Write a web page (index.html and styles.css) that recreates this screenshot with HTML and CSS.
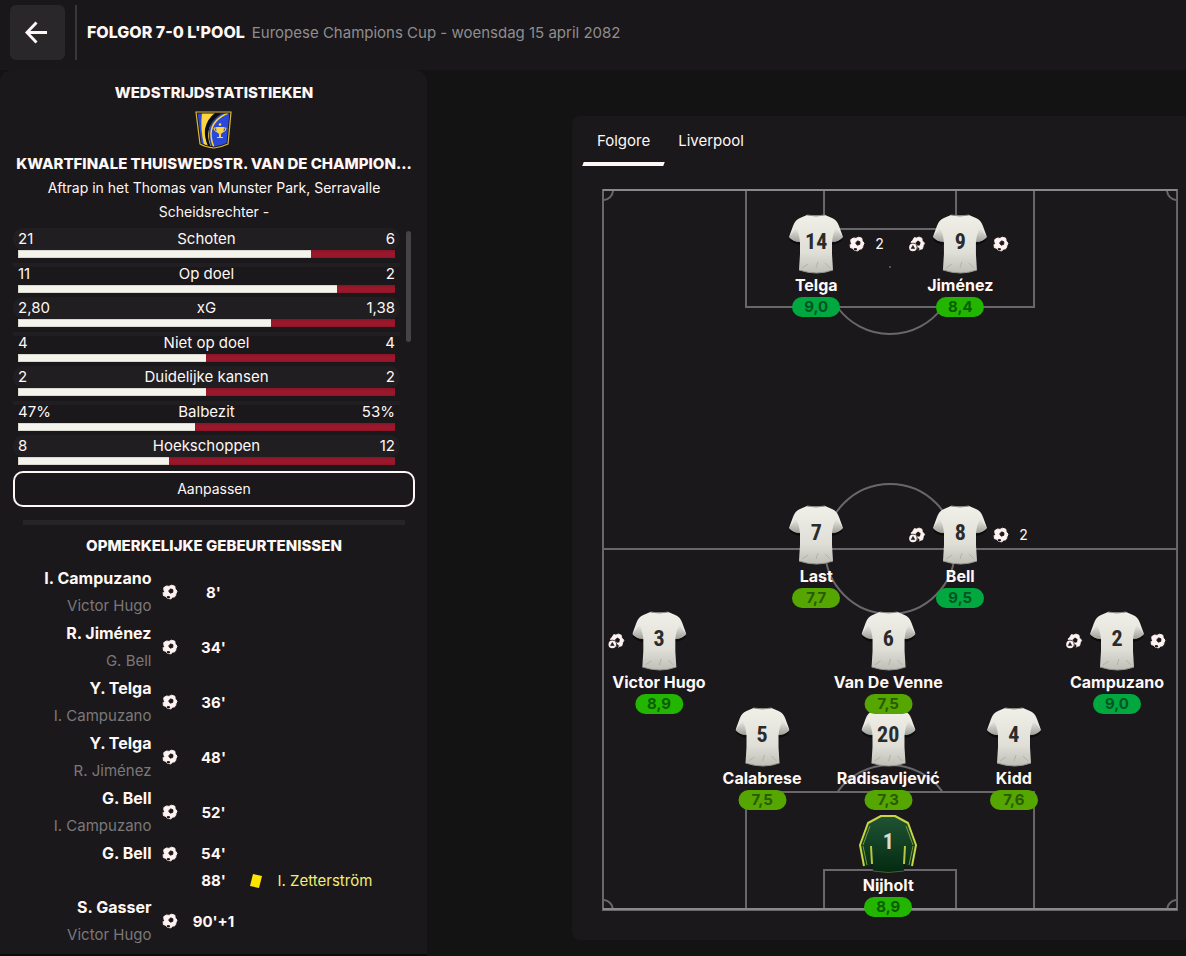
FILE: index.html
```html
<!DOCTYPE html>
<html lang="nl">
<head>
  <meta charset="UTF-8">
  <meta name="viewport" content="width=device-width, initial-scale=1.0">
  <title>Folgor 7-0 L'Pool</title>
  <link rel="stylesheet" href="styles.css">
</head>
<body>
  <!-- icons -->
  <svg class="sprite" aria-hidden="true">
    <defs>
      <linearGradient id="cloth" x1="0" y1="0" x2="0" y2="1">
        <stop offset="0" stop-color="#f0f0e9"/>
        <stop offset="0.65" stop-color="#dfdfd8"/>
        <stop offset="1" stop-color="#bfbfb8"/>
      </linearGradient>
      <linearGradient id="fold" x1="0" y1="0" x2="0" y2="1">
        <stop offset="0" stop-color="#000" stop-opacity="0"/>
        <stop offset="1" stop-color="#000" stop-opacity="0.3"/>
      </linearGradient>
      <linearGradient id="keeperCloth" x1="0" y1="0" x2="0" y2="1">
        <stop offset="0" stop-color="#1f5434"/>
        <stop offset="1" stop-color="#042a12"/>
      </linearGradient>
    </defs>
    <symbol id="ball" viewBox="0 0 16 16">
      <path d="M4.6 2 7 2.400 9.600 1.200 12.800 2.200 13.200 4.800 15 7.200 14 9.600 13.400 12.600 10.600 13.200 8.800 14.800 5.400 14.400 4.200 12.400 1.400 11.600 1.200 8.600 2 6.800 1.800 3.600Z" fill="#fff3f1" stroke="#fff3f1" stroke-width="1" stroke-linejoin="round"/>
      <path d="M8.600 4.800 11 5.800 10.800 8.400 8.200 9.200 6.600 7Z" fill="#1a181b" stroke="#1a181b" stroke-width="0.8" stroke-linejoin="round"/>
      <path d="M5 12.200 7.400 12 8.200 13.400 7 14.600 5 14.200ZM0.800 6.400 2.400 7.200 1 8.600ZM14 11.400 12.800 13.200 14.400 13Z" fill="#1a181b"/>
    </symbol>
    <symbol id="assist" viewBox="0 0 18 16">
      <path d="M6.4 1.6 8.6 2 11 1 14 2.2 14.4 4.8 16.6 7.2 15.4 9.6 14.6 12.8 12 13.4 10.8 14.6 8 13 3 6 4.6 4.6Z" fill="#fff3f1" stroke="#fff3f1" stroke-width="0.8" stroke-linejoin="round"/>
      <path d="M10 4.6 12.6 6.2 12 9.2 9.8 9.8 7.4 7Z" fill="#1a181b"/>
      <path d="M10 11 11.6 12.8 10.4 15.4 8.6 15Z" fill="#1a181b"/>
      <circle cx="5" cy="11.4" r="4.6" fill="#1a181b"/>
      <circle cx="5" cy="11.4" r="3.8" fill="#fff3f1"/>
      <path d="M5 9.400 6.800 12.600H3.200Z" fill="#1a181b" stroke="#1a181b" stroke-width="0.6" stroke-linejoin="round"/>
    </symbol>
    <symbol id="shirt" viewBox="0 0 54 60">
      <path d="M1 25Q5 29 11 30M53 25Q49 29 43 30" fill="none" stroke="#0c0b0d" stroke-width="2"/>
      <path d="M18 1Q27 2 36 1L43 4Q48 6 50 12L54 23Q50 28 43 28L43 40 44 56Q28 62 10 56L11 40 11 28Q4 28 0 23L4 12Q6 6 11 4Z" fill="url(#cloth)"/>
      <path d="M7 14Q10 19 11 28 4 28 0 23ZM47 14Q44 19 43 28 50 28 54 23Z" fill="url(#fold)"/>
      <path d="M18 1Q27 3 36 1" fill="none" stroke="#8b8a83" stroke-width="1"/>
      <path d="M13 54 19 50M27 54 29 48M36 49 41 54" stroke="#b2b2ab" stroke-width="1" fill="none"/>
      <path d="M10 56Q28 62 44 56" fill="none" stroke="#98978f" stroke-width="1"/>
    </symbol>
    <symbol id="keeper-shirt" viewBox="0 0 58 60">
      <path d="M22 2H36L50 9 57 31 53 53 46 52 45 34 45 57Q29 60 14 57L13 34 12 52 5 53 1 31 8 9Z" fill="url(#keeperCloth)"/>
      <path d="M5 52 1 31 9 9 22 2H36L49 9 57 31 53 52" fill="none" stroke="#c9d545" stroke-width="2" stroke-linejoin="round"/>
      <path d="M4 31 11 12M54 31 47 12M4 32 8 51M54 32 50 51" fill="none" stroke="#7c9a36" stroke-width="1"/>
      <path d="M12 32 13 50M46 32 45 50" stroke="#b9c63c" stroke-width="2"/>
      <path d="M14 57Q29 60 45 57" fill="none" stroke="#48602a" stroke-width="1"/>
    </symbol>
  </svg>

  <header class="topbar">
    <button class="back-btn" aria-label="Terug">
      <svg viewBox="0 0 24 24"><path d="M23 12H2M12 1.500 2 12 12 22.500" /></svg>
    </button>
    <h1>FOLGOR 7-0 L'POOL</h1>
    <p>Europese Champions Cup - woensdag 15 april 2082</p>
  </header>

  <main class="content">
    <section class="sidebar">
      <h2>WEDSTRIJDSTATISTIEKEN</h2>
      <svg class="crest" viewBox="0 0 37 38" aria-hidden="true">
        <path d="M1 1H36L33 33Q27 36 19 37 10 36 5 33Z" fill="#2b49d8"/>
        <path d="M6 2H25Q13 12 14 26L16 36 6 33Z" fill="#fcd440"/>
        <path d="M4 2H7Q5 18 9 34L5 32Z" fill="#2b49d8"/>
        <path d="M20 2H27Q15 10 13 22 13 30 16 36L13 35Q9 26 10 18 12 8 20 2Z" fill="#0a0d1c"/>
        <path d="M28 2Q15 10 14 21 14 30 17 36" fill="none" stroke="#2d437e" stroke-width="1"/>
        <path d="M33 2Q17 9 16 22 16 30 19 36" fill="none" stroke="#fcd440" stroke-width="1.500"/>
        <path d="M21 16H29Q29 23 25 23 21 23 21 16ZM24 23H26V26H28V27H22V26H24Z" fill="#fcd440"/>
        <path d="M21 17H19Q19 20 22 21M29 17H31Q31 20 28 21" fill="none" stroke="#fcd440"/>
        <circle cx="25" cy="13.500" r="1.300" fill="#fcd440"/>
        <path d="M1 1H36L33 33Q27 36 19 37 10 36 5 33Z" fill="none" stroke="#1c1a10" stroke-width="3"/>
        <path d="M1 1H36L33 33Q27 36 19 37 10 36 5 33Z" fill="none" stroke="#dcb73c" stroke-width="1.200"/>
      </svg>
      <h2 class="match-title">KWARTFINALE THUISWEDSTR. VAN DE CHAMPION...</h2>
      <p class="match-info">Aftrap in het Thomas van Munster Park, Serravalle</p>
      <p class="match-info">Scheidsrechter -</p>

      <div class="stats">
        <ul class="stat-list">
          <li class="stat">
            <div class="stat-row"><span>21</span><span>Schoten</span><span>6</span></div>
            <div class="bar"><div class="bar-home" style="width:77.8%"></div></div>
          </li>
          <li class="stat">
            <div class="stat-row"><span>11</span><span>Op doel</span><span>2</span></div>
            <div class="bar"><div class="bar-home" style="width:84.6%"></div></div>
          </li>
          <li class="stat">
            <div class="stat-row"><span>2,80</span><span>xG</span><span>1,38</span></div>
            <div class="bar"><div class="bar-home" style="width:67%"></div></div>
          </li>
          <li class="stat">
            <div class="stat-row"><span>4</span><span>Niet op doel</span><span>4</span></div>
            <div class="bar"><div class="bar-home" style="width:50%"></div></div>
          </li>
          <li class="stat">
            <div class="stat-row"><span>2</span><span>Duidelijke kansen</span><span>2</span></div>
            <div class="bar"><div class="bar-home" style="width:50%"></div></div>
          </li>
          <li class="stat">
            <div class="stat-row"><span>47%</span><span>Balbezit</span><span>53%</span></div>
            <div class="bar"><div class="bar-home" style="width:47%"></div></div>
          </li>
          <li class="stat">
            <div class="stat-row"><span>8</span><span>Hoekschoppen</span><span>12</span></div>
            <div class="bar"><div class="bar-home" style="width:40%"></div></div>
          </li>
        </ul>
        <div class="scroll-thumb"></div>
      </div>
      <button class="adjust-btn">Aanpassen</button>

      <hr class="divider">

      <h2>OPMERKELIJKE GEBEURTENISSEN</h2>
      <ul class="events">
        <li class="event">
          <div class="scorer"><b>I. Campuzano</b><span>Victor Hugo</span></div>
          <svg class="ball"><use href="#ball"/></svg>
          <b class="minute">8'</b>
        </li>
        <li class="event">
          <div class="scorer"><b>R. Jiménez</b><span>G. Bell</span></div>
          <svg class="ball"><use href="#ball"/></svg>
          <b class="minute">34'</b>
        </li>
        <li class="event">
          <div class="scorer"><b>Y. Telga</b><span>I. Campuzano</span></div>
          <svg class="ball"><use href="#ball"/></svg>
          <b class="minute">36'</b>
        </li>
        <li class="event">
          <div class="scorer"><b>Y. Telga</b><span>R. Jiménez</span></div>
          <svg class="ball"><use href="#ball"/></svg>
          <b class="minute">48'</b>
        </li>
        <li class="event">
          <div class="scorer"><b>G. Bell</b><span>I. Campuzano</span></div>
          <svg class="ball"><use href="#ball"/></svg>
          <b class="minute">52'</b>
        </li>
        <li class="event single">
          <div class="scorer"><b>G. Bell</b></div>
          <svg class="ball"><use href="#ball"/></svg>
          <b class="minute">54'</b>
        </li>
        <li class="event single">
          <b class="minute">88'</b>
          <svg class="card" viewBox="0 0 14 16"><path d="M4 1 13 3 10 15 1 13Z"/></svg>
          <span class="booked">I. Zetterström</span>
        </li>
        <li class="event">
          <div class="scorer"><b>S. Gasser</b><span>Victor Hugo</span></div>
          <svg class="ball"><use href="#ball"/></svg>
          <b class="minute">90'+1</b>
        </li>
      </ul>
    </section>

    <section class="lineup">
      <nav class="tabs">
        <button class="tab active">Folgore</button>
        <button class="tab">Liverpool</button>
      </nav>

      <div class="pitch">
        <svg class="pitch-lines" viewBox="0 0 576 722" aria-hidden="true">
          <path d="M144 1V118H432V1M222 1V40H354V1M236 119A65 65 0 0 0 340 119"/>
          <path d="M144 721V603H432V721M222 721V681H354V721M236 602A65 65 0 0 1 340 602"/>
          <path d="M1 360H575"/>
          <circle cx="288" cy="360" r="65"/>
          <path d="M11 2A10 10 0 0 1 2 11M565 2A10 10 0 0 0 574 11M2 711A10 10 0 0 1 11 720M574 711A10 10 0 0 0 565 720"/>
          <rect x="1" y="1" width="574" height="720"/>
          <path class="goal-line" d="M1 1H575M1 720H575"/>
          <circle class="spot" cx="288" cy="78" r="1"/>
          <circle class="spot" cx="288" cy="360" r="1"/>
        </svg>

        <!-- attack -->
        <div class="player row-st col-left">
          <div class="shirt"><svg><use href="#shirt"/></svg><span>14</span></div>
          <div class="goals"><svg class="ball"><use href="#ball"/></svg>2</div>
          <b>Telga</b><span class="rating great">9,0</span>
        </div>
        <div class="player row-st col-right">
          <div class="shirt"><svg><use href="#shirt"/></svg><span>9</span></div>
          <div class="assists"><svg><use href="#assist"/></svg></div>
          <div class="goals"><svg class="ball"><use href="#ball"/></svg></div>
          <b>Jiménez</b><span class="rating good">8,4</span>
        </div>
        <!-- midfield -->
        <div class="player row-cm col-left">
          <div class="shirt"><svg><use href="#shirt"/></svg><span>7</span></div>
          <b>Last</b><span class="rating">7,7</span>
        </div>
        <div class="player row-cm col-right">
          <div class="shirt"><svg><use href="#shirt"/></svg><span>8</span></div>
          <div class="assists"><svg><use href="#assist"/></svg></div>
          <div class="goals"><svg class="ball"><use href="#ball"/></svg>2</div>
          <b>Bell</b><span class="rating great">9,5</span>
        </div>
        <div class="player row-dm col-wing-left">
          <div class="shirt"><svg><use href="#shirt"/></svg><span>3</span></div>
          <div class="assists"><svg><use href="#assist"/></svg></div>
          <b>Victor Hugo</b><span class="rating good">8,9</span>
        </div>
        <div class="player row-dm col-center">
          <div class="shirt"><svg><use href="#shirt"/></svg><span>6</span></div>
          <b>Van De Venne</b><span class="rating">7,5</span>
        </div>
        <div class="player row-dm col-wing-right">
          <div class="shirt"><svg><use href="#shirt"/></svg><span>2</span></div>
          <div class="assists"><svg><use href="#assist"/></svg></div>
          <div class="goals"><svg class="ball"><use href="#ball"/></svg></div>
          <b>Campuzano</b><span class="rating great">9,0</span>
        </div>
        <!-- defence -->
        <div class="player row-cb col-back-left">
          <div class="shirt"><svg><use href="#shirt"/></svg><span>5</span></div>
          <b>Calabrese</b><span class="rating">7,5</span>
        </div>
        <div class="player row-cb col-center">
          <div class="shirt"><svg><use href="#shirt"/></svg><span>20</span></div>
          <b>Radisavljević</b><span class="rating">7,3</span>
        </div>
        <div class="player row-cb col-back-right">
          <div class="shirt"><svg><use href="#shirt"/></svg><span>4</span></div>
          <b>Kidd</b><span class="rating">7,6</span>
        </div>
        <div class="player row-gk col-center">
          <div class="shirt keeper"><svg><use href="#keeper-shirt"/></svg><span>1</span></div>
          <b>Nijholt</b><span class="rating good">8,9</span>
        </div>
      </div>
    </section>
  </main>
</body>
</html>
```
FILE: styles.css
```css
:root {
  --bg: #131313;
  --panel: #1a181b;
  --text: #fff7f5;
  --muted: #8f8d8f;
  --home: #f4f4ec;
  --away: #9b172b;
  --line: #69676a;
}
* {
  box-sizing: border-box;
}
body {
  margin: 0;
  min-height: 100vh;
  display: flex;
  flex-direction: column;
  background: var(--bg);
  color: var(--text);
  font-family: Inter, "Liberation Sans", sans-serif;
  font-size: 15px;
}
h1, h2, p, ul {
  margin: 0;
  padding: 0;
  font-size: 15px;
}
ul {
  list-style: none;
}
button {
  font: inherit;
  color: inherit;
  background: none;
  border: none;
  padding: 0;
  cursor: pointer;
}
.sprite {
  position: absolute;
  width: 0;
  height: 0;
}

/* top bar */
.topbar {
  display: flex;
  align-items: center;
  height: 70px;
  padding: 0 10px 5px;
  background: #19171a;
}
.back-btn {
  width: 55px;
  height: 55px;
  padding-right: 2px;
  border-radius: 6px;
  background: #29272a;
}
.back-btn svg {
  display: block;
  width: 23px;
  height: 23px;
  margin: 0 auto;
  fill: none;
  stroke: var(--text);
  stroke-width: 3;
}
.topbar h1 {
  margin-left: 10px;
  padding-left: 10px;
  border-left: 2px solid #39373a;
  line-height: 55px;
  font-size: 16px;
  font-weight: 800;
}
.topbar p {
  margin-left: 7px;
  color: var(--muted);
}

.content {
  flex: 1;
  display: grid;
  grid-template-columns: minmax(0, 36fr) minmax(0, 64fr);
}

/* match stats */
.sidebar {
  padding: 11px 12px 0 13px;
  border-radius: 12px 12px 0 0;
  border-bottom: 2px solid #0c0b0c;
  background: var(--panel);
}
.sidebar h2 {
  text-align: center;
  line-height: 24px;
  font-weight: 800;
}
.crest {
  display: block;
  width: 37px;
  height: 38px;
  margin: 6px auto 3px;
}
.sidebar .match-title {
  overflow: hidden;
  white-space: nowrap;
  text-overflow: ellipsis;
}
.match-info {
  text-align: center;
  line-height: 24px;
  font-size: 14px;
}
.stats {
  display: flex;
  gap: 6px;
  margin-top: 4px;
}
.stat-list {
  flex: 1;
  height: 242px;
  display: grid;
  grid-auto-rows: 1fr;
}
.stat {
  line-height: 22px;
}
.stat-row {
  display: grid;
  grid-template-columns: 1fr auto 1fr;
  padding: 0 5px;
  border-radius: 10px;
}
.stat-row span:last-child {
  text-align: right;
}
.stat:nth-child(odd) .stat-row {
  background: #201e21;
}
.stat:nth-child(even) {
  background: linear-gradient(#201e21, #201e21) 0 0 / 100% 4px no-repeat;
}
.bar {
  height: 8px;
  margin: 0 5px;
  background: linear-gradient(#86152a, var(--away) 3px, var(--away) 6px, #8c1528);
}
.bar-home {
  height: 100%;
  background: var(--home);
  border: 1px solid #d9d8ce;
  border-right: none;
}
.scroll-thumb {
  width: 5px;
  height: 111px;
  margin: 3px 4px 0 0;
  border-radius: 3px;
  background: #454346;
}
.adjust-btn {
  display: block;
  width: 100%;
  height: 36px;
  margin-top: 1px;
  padding-bottom: 2px;
  border: 2px solid var(--text);
  border-radius: 10px;
  font-size: 14px;
}
.divider {
  height: 5px;
  margin: 13px 10px 9px;
  border: none;
  background: #262427;
}

/* events */
.events {
  margin: 7px -12px 0 -13px;
}
.event {
  display: grid;
  grid-template-columns: 1fr 38px 48px 38px 1fr;
  align-items: center;
  padding-bottom: 1px;
  line-height: 27px;
}
.event.single {
  padding-bottom: 0;
}
.scorer {
  display: flex;
  flex-direction: column;
  text-align: right;
}
.scorer b {
  font-size: 16px;
}
.scorer span {
  color: #7a787a;
}
.ball {
  width: 16px;
  height: 16px;
}
.event .ball, .card {
  justify-self: center;
}
.minute {
  grid-column: 3;
  justify-self: center;
}
.card {
  width: 14px;
  height: 16px;
  fill: #ffe600;
}
.booked {
  padding-left: 2px;
  color: #f3ee72;
}

/* lineup */
.lineup {
  align-self: start;
  margin: 46px 0 16px 145px;
  padding: 0 8px 29px 11px;
  border-radius: 8px 0 0 8px;
  background: var(--panel);
}
.tabs {
  display: flex;
}
.tab {
  height: 50px;
  padding: 0 14px 2px;
}
.tab.active {
  position: relative;
}
.tab.active::after {
  content: "";
  position: absolute;
  left: 0;
  right: 0;
  bottom: 0;
  height: 4px;
  background: var(--text);
  transform: skewX(-20deg);
}
.pitch {
  position: relative;
  margin: 23px 0 0 19px;
}
.pitch-lines {
  display: block;
  width: 100%;
  fill: none;
  stroke: var(--line);
  stroke-width: 2;
}
.pitch-lines .goal-line {
  stroke: #8a888b;
}
.pitch-lines .spot {
  fill: var(--line);
  stroke: none;
}

/* players on the pitch */
.player {
  position: absolute;
  display: flex;
  flex-direction: column;
  align-items: center;
  transform: translateX(-50%);
  white-space: nowrap;
  line-height: 23px;
  font-size: 16px;
}
.row-st { top: 3.4%; z-index: 5; }
.row-cm { top: 43.7%; z-index: 4; }
.row-dm { top: 58.5%; z-index: 3; }
.row-cb { top: 71.8%; z-index: 2; }
.row-gk { top: 86.6%; z-index: 1; }
.col-wing-left { left: 9.9%; }
.col-back-left { left: 27.8%; }
.col-left { left: 37.2%; }
.col-center { left: 49.7%; }
.col-right { left: 62.2%; }
.col-back-right { left: 71.5%; }
.col-wing-right { left: 89.4%; }
.shirt {
  display: grid;
  width: 54px;
  height: 60px;
}
.shirt.keeper {
  width: 58px;
}
.shirt svg, .shirt span {
  grid-area: 1 / 1;
  width: 100%;
  height: 100%;
}
.shirt span {
  text-align: center;
  line-height: 55px;
  font-family: "Roboto Condensed", Roboto, sans-serif;
  font-size: 22px;
  font-weight: bold;
  color: #2b2b2a;
}
.shirt.keeper span {
  color: #d5ddd5;
}
.goals, .assists {
  position: absolute;
  top: 20px;
  display: flex;
  align-items: center;
  gap: 10px;
  height: 20px;
}
.goals {
  left: calc(50% + 33px);
  font-size: 14px;
}
.assists {
  right: calc(50% + 34px);
}
.assists svg {
  width: 18px;
  height: 16px;
}
.rating {
  width: 48px;
  height: 20px;
  border-radius: 10px;
  background: #55a600;
  color: #2b5a02;
  text-align: center;
  line-height: 20px;
  font-size: 15px;
  font-weight: bold;
}
.rating.good {
  background: #22b600;
  color: #0b5d04;
}
.rating.great {
  background: #00a83f;
  color: #015524;
}
```
